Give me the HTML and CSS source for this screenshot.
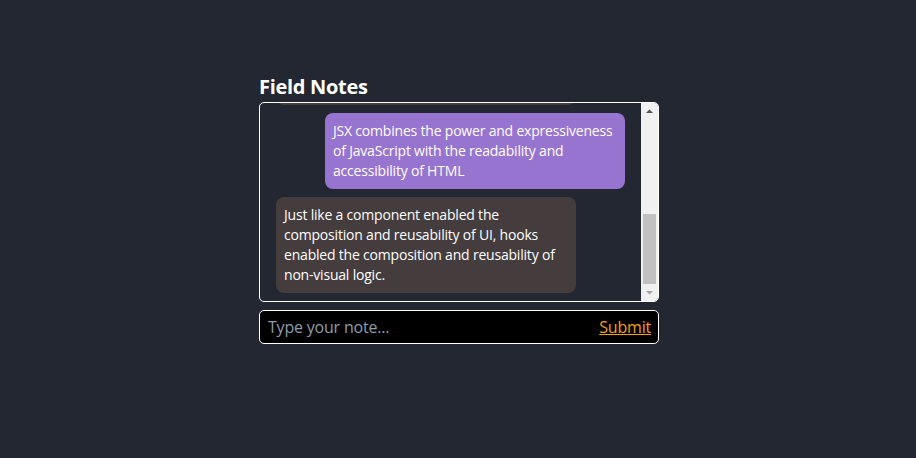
FILE: index.html
```html
<!DOCTYPE html>
<html>
<head>
<meta charset="utf-8">
<link rel="stylesheet" href="styles.css">
</head>
<body>
<main class="app">
  <h1 class="title">Field Notes</h1>
  <div class="notes">
    <div class="feed">
      <div class="note note-user">Just like a component enabled the composition and reusability of UI, hooks enabled the composition and reusability of non-visual logic.</div>
      <div class="note note-me">JSX combines the power and expressiveness of JavaScript with the readability and accessibility of HTML</div>
      <div class="note note-user">React lets you build user interfaces out of individual pieces called components, and combine them into screens.</div>
      <div class="note note-me">Hooks let you use state and other React features without writing a class.</div>
      <div class="note note-user">Keep components pure: same inputs, same output, no surprises along the way for anyone.</div>
    </div>
    <div class="scrollbar" aria-hidden="true">
      <div class="sb-btn">
        <svg width="17" height="17" viewBox="0 0 17 17"><path d="M5 10 L8.5 6.5 L12 10 Z" fill="#505050"/></svg>
      </div>
      <div class="sb-track"><div class="sb-thumb"></div></div>
      <div class="sb-btn">
        <svg width="17" height="17" viewBox="0 0 17 17"><path d="M5 7 L8.5 10.5 L12 7 Z" fill="#a3a3a3"/></svg>
      </div>
    </div>
  </div>
  <form class="composer">
    <input class="composer-input" type="text" placeholder="Type your note...">
    <a class="composer-submit" href="#">Submit</a>
  </form>
</main>
</body>
</html>
```
FILE: styles.css
```css
html, body {
  margin: 0;
  padding: 0;
  background: #222731;
  height: 100%;
}
body {
  font-family: "Open Sans", "Noto Sans", sans-serif;
  color: #fff;
}
.app {
  width: 400px;
  margin-left: calc(50% - 199px);
  padding-top: 74px;
}
.title {
  margin: 0 0 2px 0;
  font-size: 20px;
  font-weight: 700;
  line-height: 26px;
  letter-spacing: -0.3px;
  color: #fff;
}
.notes {
  height: 200px;
  box-sizing: border-box;
  border: 1px solid #fff;
  border-radius: 5px;
  overflow: hidden;
  display: flex;
}
.feed {
  flex: 1;
  min-width: 0;
  overflow: hidden;
  display: flex;
  flex-direction: column-reverse;
  gap: 8px;
  padding: 8px 16px;
}
.scrollbar {
  width: 17px;
  flex: none;
  background: #f1f1f1;
  display: flex;
  flex-direction: column;
}
.sb-btn {
  height: 17px;
  flex: none;
}
.sb-btn svg {
  display: block;
}
.sb-track {
  flex: 1;
  display: flex;
  flex-direction: column;
  justify-content: flex-end;
  padding: 0 2px;
}
.sb-thumb {
  height: 70px;
  background: #c1c1c1;
}
.note {
  flex: none;
  width: 300px;
  box-sizing: border-box;
  padding: 8px;
  border-radius: 8px;
  font-size: 14px;
  line-height: 20px;
  letter-spacing: -0.2px;
  color: #fff;
}
.note-user {
  align-self: flex-start;
  background: #443c3d;
}
.note-me {
  align-self: flex-end;
  background: #9774d0;
}
.composer {
  margin-top: 8px;
  height: 34px;
  box-sizing: border-box;
  border: 1px solid #fff;
  border-radius: 5px;
  background: #000;
  display: flex;
  align-items: center;
  padding: 0 7px 0 8px;
}
.composer-input {
  flex: 1;
  min-width: 0;
  background: transparent;
  border: none;
  outline: none;
  color: #fff;
  font-family: "Open Sans", "Noto Sans", sans-serif;
  font-size: 16px;
  letter-spacing: -0.2px;
  padding: 0;
}
.composer-input::placeholder {
  color: #8d9cae;
}
.composer-submit {
  color: #f5a00f;
  font-size: 16px;
  letter-spacing: -0.2px;
  text-decoration: underline;
}
```
